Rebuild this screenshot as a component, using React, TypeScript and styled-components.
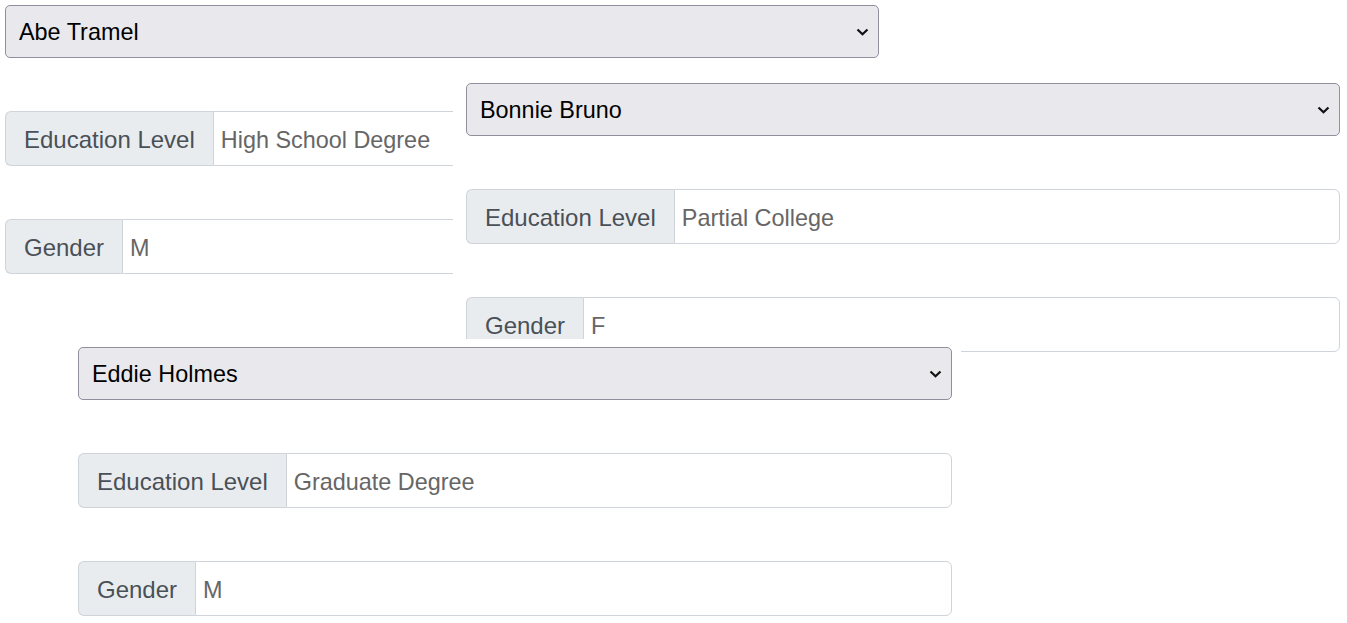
import styled, { createGlobalStyle } from 'styled-components';

const GlobalStyle = createGlobalStyle`
  html, body {
    margin: 0;
    padding: 0;
    background: #fff;
  }
  body {
    font-family: "Liberation Sans", Arial, sans-serif;
    overflow: hidden;
  }
`;

type Person = {
  name: string;
  education: string;
  gender: string;
  left: number;
  top: number;
};

const people: Person[] = [
  { name: 'Abe Tramel', education: 'High School Degree', gender: 'M', left: -8, top: -3 },
  { name: 'Bonnie Bruno', education: 'Partial College', gender: 'F', left: 453, top: 75 },
  { name: 'Eddie Holmes', education: 'Graduate Degree', gender: 'M', left: 65, top: 339 },
];

const Desktop = styled.div`
  position: relative;
  width: 1347px;
  height: 623px;
  overflow: hidden;
`;

const Window = styled.div<{ $left: number; $top: number }>`
  position: absolute;
  left: ${(p) => p.$left}px;
  top: ${(p) => p.$top}px;
  width: 874px;
  padding: 8px 9px 8px 13px;
  background: #fff;
  display: flex;
  flex-direction: column;
  gap: 53px;
`;

const SelectWrap = styled.div`
  position: relative;
  height: 53px;
`;

const Select = styled.select`
  appearance: none;
  -webkit-appearance: none;
  width: 100%;
  height: 100%;
  box-sizing: border-box;
  margin: 0;
  padding: 0 40px 0 13px;
  background: #e9e9ed;
  border: 1px solid #8f8f9d;
  border-radius: 5px;
  color: #000;
  font-family: "Liberation Sans", Arial, sans-serif;
  font-size: 23.4px;
  outline: none;
`;

const Chevron = styled.svg`
  position: absolute;
  right: 10px;
  top: 50%;
  width: 13px;
  height: 8px;
  margin-top: -4px;
  pointer-events: none;
`;

const InputGroup = styled.div`
  display: flex;
  height: 55px;
  box-sizing: border-box;
`;

const Label = styled.span`
  display: flex;
  align-items: center;
  padding: 2px 18px 0;
  background: #e9ecef;
  border: 1px solid #ced4da;
  border-right: none;
  border-radius: 6px 0 0 6px;
  color: #495057;
  font-size: 24px;
  white-space: nowrap;
`;

const Field = styled.input`
  flex: 1;
  min-width: 0;
  box-sizing: border-box;
  margin: 0;
  padding: 4px 7px 0;
  border: 1px solid #ced4da;
  border-radius: 0 6px 6px 0;
  background: #fff;
  color: #666;
  font-family: "Liberation Sans", Arial, sans-serif;
  font-size: 23.4px;
  outline: none;
`;

const PersonCard = ({ person }: { person: Person }) => (
  <Window $left={person.left} $top={person.top}>
    <SelectWrap>
      <Select defaultValue={person.name}>
        <option>{person.name}</option>
      </Select>
      <Chevron viewBox="0 0 13 8">
        <path d="M1.5 1.5 L6.5 6.3 L11.5 1.5" fill="none" stroke="#111" strokeWidth="2.2" />
      </Chevron>
    </SelectWrap>
    <InputGroup>
      <Label>Education Level</Label>
      <Field readOnly value={person.education} />
    </InputGroup>
    <InputGroup>
      <Label>Gender</Label>
      <Field readOnly value={person.gender} />
    </InputGroup>
  </Window>
);

const App = () => (
  <>
    <GlobalStyle />
    <Desktop>
      {people.map((p) => (
        <PersonCard key={p.name} person={p} />
      ))}
    </Desktop>
  </>
);

export default App;
